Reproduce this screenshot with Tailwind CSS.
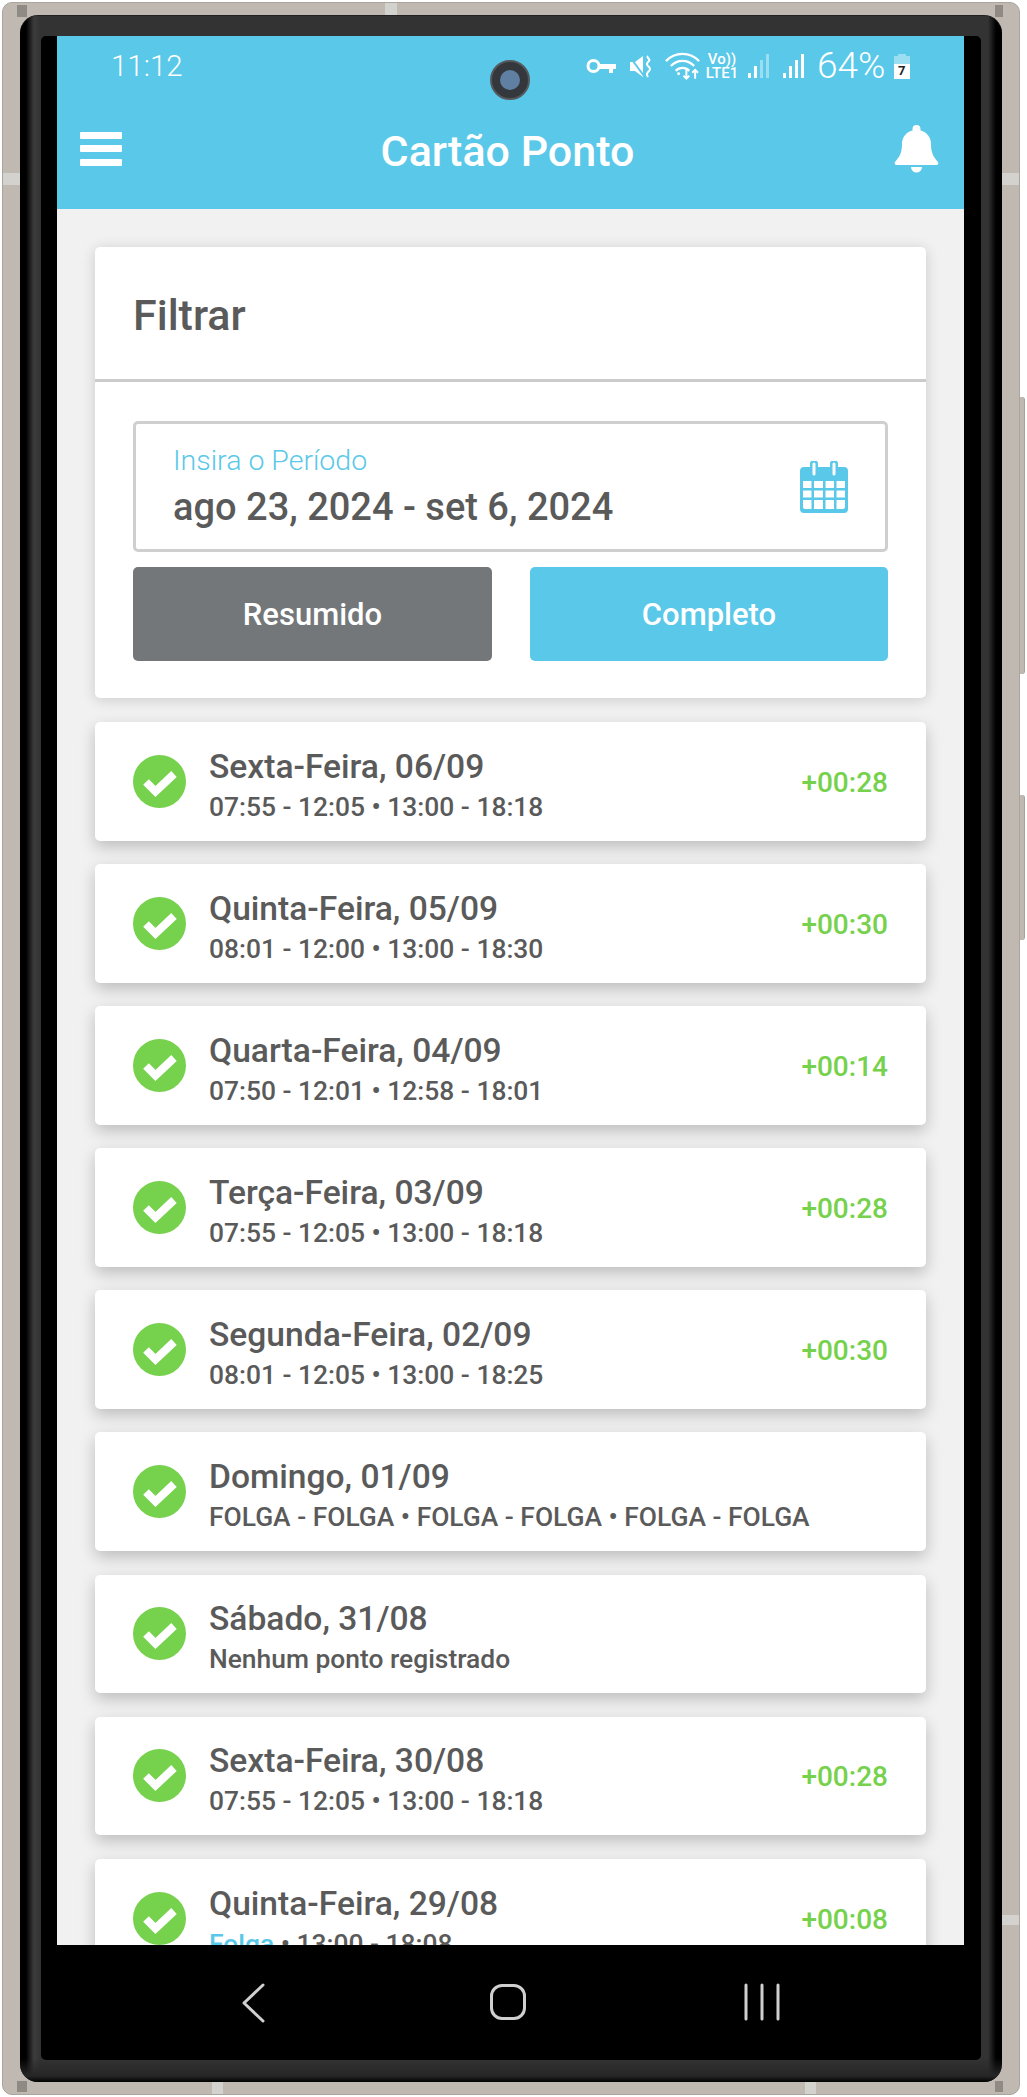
<!DOCTYPE html>
<html lang="pt">
<head>
  <meta charset="UTF-8">
  <title>Cartão Ponto</title>
  <script src="https://cdn.jsdelivr.net/npm/@tailwindcss/browser@4"></script>
</head>
<body class="bg-white font-['Roboto',sans-serif]">
  <div class="relative w-[1027px] h-[2097px] overflow-hidden">
    <!-- side buttons -->
    <div class="absolute left-[1018px] top-[397px] w-[7px] h-[277px] rounded-r-[3px] bg-[#bfb9b1] border-r border-[#a8a29a]"></div>
    <div class="absolute left-[1018px] top-[795px] w-[7px] h-[145px] rounded-r-[3px] bg-[#bfb9b1] border-r border-[#a8a29a]"></div>

    <!-- phone body -->
    <div class="absolute left-[2px] top-[2px] w-[1018px] h-[2093px] rounded-[10px] bg-[#bfb9b1] pl-[17px] pr-[17px] pt-[12px] pb-[12px] border border-[#aaa49c]">
      <div class="h-full rounded-[18px] border-t border-[#222] pl-[21px] pr-[21px] pt-[20px] pb-[22px] bg-[linear-gradient(to_top,#000_0px,#262626_6px,transparent_24px),linear-gradient(to_right,#000_0px,#000_6px,#3c3c3c_14px,#333_20px,#333_calc(100%-14px),#000_calc(100%-6px))]">
        <div class="h-full rounded-[5px] bg-black pl-[16px] pr-[17px] flex flex-col">
          <!-- screen -->
          <div class="h-[1909px] bg-[#f1f1f1] overflow-hidden flex flex-col">
            <header class="h-[173px] bg-[#5ac8e8] text-white shrink-0">
              <div class="h-[70px] flex items-start">
                <span class="ml-[54px] mt-[11px] text-[29.500px] leading-[38px] font-light">11:12</span>
                <div class="ml-auto mr-[53px] mt-[16px] flex items-center h-[28px]">
                  <!-- key -->
                  <svg width="31" height="16" viewBox="0 0 31 16" fill="none" stroke="white" stroke-width="3"><circle cx="7.500" cy="8" r="5.500"/><path d="M13 6h17v5h-3v4h-4v-4h-10" fill="white" stroke="none"/></svg>
                  <!-- mute -->
                  <svg class="ml-[12px]" width="25" height="25" viewBox="0 0 25 25" fill="white"><path d="M1 8h5l8-6v21l-8-6H1z"/><path d="M1 3l14 19" stroke="#5ac8e8" stroke-width="2"/><path d="M19 2c-2 2 3 3 1 5s-3 3-1 5 3 3 1 5-3 3-1 6" fill="none" stroke="white" stroke-width="2"/></svg>
                  <!-- wifi -->
                  <svg class="ml-[11px]" width="35" height="28" viewBox="0 0 36 28" fill="none" stroke="white" stroke-width="2.400"><path d="M1 9C10 -1 26 -1 35 9"/><path d="M6 14c7-7 17-7 24 0"/><path d="M11 19c4-4 10-4 14 0"/><circle cx="14" cy="22" r="1.500" fill="white" stroke="none"/><path d="M22 17v10M19 24l3 3 3-3M31 27V18M28 21l3-3 3 3" stroke-width="2"/></svg>
                  <div class="ml-[7px] w-[30px] flex flex-col items-center text-[15px] leading-[14px] font-medium">
                    <span>Vo))</span>
                    <span>LTE1</span>
                  </div>
                  <!-- signal -->
                  <svg class="ml-[10px]" width="23" height="26" viewBox="0 0 23 26" fill="white"><rect x="1" y="20" width="3" height="5"/><rect x="7" y="13" width="3" height="12"/><rect x="13" y="7" width="3" height="18" opacity=".4"/><rect x="19" y="1" width="3" height="24" opacity=".4"/></svg>
                  <svg class="ml-[12px]" width="23" height="26" viewBox="0 0 23 26" fill="white"><rect x="1" y="20" width="3" height="5"/><rect x="7" y="13" width="3" height="12"/><rect x="13" y="7" width="3" height="18"/><rect x="19" y="1" width="3" height="24"/></svg>
                  <span class="ml-[12px] w-[69px] whitespace-nowrap text-[37px] leading-[28px] font-light">64%</span>
                  <!-- battery -->
                  <div class="ml-[7px] relative w-[18px] h-[25px]">
                    <svg class="absolute left-0 top-0" width="18" height="25" viewBox="0 0 18 25"><path d="M5 0h8v2h4v9H1V2h4z" fill="white" opacity=".4"/><path d="M1 10h16v15H1z" fill="white"/></svg>
                    <span class="absolute left-[5px] top-[10px] text-[13px] leading-[14px] font-bold text-[#222]">7</span>
                  </div>
                </div>
              </div>
              <div class="relative h-[60px] flex items-center justify-center">
                <svg class="absolute left-[23px] top-[26px]" width="42" height="34" viewBox="0 0 42 34" fill="white"><rect width="42" height="7" y="0" rx="1"/><rect width="42" height="7" y="13" rx="1"/><rect width="42" height="7" y="27" rx="1"/></svg>
                <h1 class="text-[43px] leading-[60px] font-medium mt-[30px] mr-[6px]">Cartão Ponto</h1>
                <svg class="absolute left-[837px] top-[19px]" width="45" height="48" viewBox="0 0 45 48" fill="white"><path d="M22.500 0a4 4 0 0 1 4 4v1.500C33 7 37 12.500 37 19c0 10 3 13 7 18 1 1.500 0 3-1.500 3h-40C1 40 0 38.500 1 37c4-5 7-8 7-18C8 12.500 12 7 18.500 5.500V4a4 4 0 0 1 4-4z"/><path d="M17 42h11a5.500 5.500 0 0 1-11 0z"/></svg>
              </div>
            </header>

            <main class="pl-[38px] pr-[38px] pt-[38px]">
              <section class="bg-white rounded-[5px] shadow-[0_2px_14px_rgba(0,0,0,0.16)] h-[451px]">
                <div class="h-[135px] border-b-[3px] border-[#cbcbcb] pl-[38px] flex items-center">
                  <h2 class="text-[43px] font-medium text-[#5a5a5a] mt-[4px]">Filtrar</h2>
                </div>
                <div class="pl-[38px] pr-[38px] pt-[39px]">
                  <div class="h-[131px] rounded-[5px] border-[3px] border-[#cfcfcf] pl-[37px] pr-[37px] flex items-center justify-between">
                    <div class="flex flex-col">
                      <span class="mb-[4px] text-[28.500px] leading-[36px] font-light text-[#5ac8e8]">Insira o Período</span>
                      <span class="text-[38px] leading-[48px] font-medium text-[#5a5a5a]">ago 23, 2024 - set 6, 2024</span>
                    </div>
                    <svg width="48" height="52" viewBox="0 0 48 52" fill="#5ac8e8"><path fill-rule="evenodd" d="M10 3a4 4 0 0 1 8 0v3h12V3a4 4 0 0 1 8 0v3h6a4 4 0 0 1 4 4v38a4 4 0 0 1-4 4H4a4 4 0 0 1-4-4V10a4 4 0 0 1 4-4h6zM12.500 3v10a1.500 1.500 0 0 0 3 0V3a1.500 1.500 0 0 0-3 0zM32.500 3v10a1.500 1.500 0 0 0 3 0V3a1.500 1.500 0 0 0-3 0zM3 20v7h8.500v-7zM14 20v7h9v-7zM25.500 20v7H34v-7zM36.500 20v7H45v-7zM3 29.500v7h8.500v-7zM14 29.500v7h9v-7zM25.500 29.500v7H34v-7zM36.500 29.500v7H45v-7zM3 39v7a2 2 0 0 0 2 2h6.500v-9zM14 39v9h9v-9zM25.500 39v9H34v-9zM36.500 39v9H43a2 2 0 0 0 2-2v-7z"/></svg>
                  </div>
                  <div class="mt-[15px] flex justify-between">
                    <button class="w-[359px] h-[94px] pt-[3px] rounded-[5px] bg-[#74777a] text-white text-[31px] font-medium">Resumido</button>
                    <button class="w-[358px] h-[94px] pt-[3px] rounded-[5px] bg-[#5ac8e8] text-white text-[31px] font-medium">Completo</button>
                  </div>
                </div>
              </section>

              <div id="dias" class="mt-[24px] flex flex-col gap-[23.500px]"></div>
            </main>
          </div>

          <!-- android nav bar -->
          <nav class="relative flex-1">
            <svg class="absolute left-[184px] top-[38px]" width="24" height="40" viewBox="0 0 24 40" fill="none" stroke="#cfcfcf" stroke-width="3" stroke-linecap="round" stroke-linejoin="round"><path d="M22 2L3 20l19 18"/></svg>
            <div class="absolute left-[433px] top-[39px] w-[36px] h-[36px] rounded-[12px] border-[3px] border-[#cfcfcf]"></div>
            <svg class="absolute left-[687px] top-[38px]" width="36" height="38" viewBox="0 0 36 38" stroke="#cfcfcf" stroke-width="3" stroke-linecap="round"><path d="M2 2v34M18 2v34M34 2v34"/></svg>
          </nav>
        </div>
      </div>
    </div>

    <!-- antenna bands -->
    <div class="absolute left-[3px] top-[173px] w-[17px] h-[12px] bg-[#d4d2ce]"></div>
    <div class="absolute left-[1002px] top-[173px] w-[17px] h-[12px] bg-[#d4d2ce]"></div>
    <div class="absolute left-[1002px] top-[1915px] w-[17px] h-[10px] bg-[#d4d2ce]"></div>
    <div class="absolute left-[385px] top-[3px] w-[12px] h-[12px] bg-[#d4d2ce]"></div>
    <div class="absolute left-[212px] top-[2082px] w-[11px] h-[12px] bg-[#d4d2ce]"></div>
    <div class="absolute left-[805px] top-[2082px] w-[11px] h-[12px] bg-[#d4d2ce]"></div>
    <!-- corner wedges -->
    <div class="absolute left-[17px] top-[5px] w-[10px] h-[12px] bg-[#8f8a83]"></div>
    <div class="absolute left-[995px] top-[5px] w-[8px] h-[12px] bg-[#8f8a83]"></div>
    <div class="absolute left-[17px] top-[2081px] w-[10px] h-[11px] bg-[#8f8a83]"></div>
    <div class="absolute left-[995px] top-[2081px] w-[8px] h-[11px] bg-[#8f8a83]"></div>

    <!-- front camera -->
    <div class="absolute left-[490px] top-[60px] w-[40px] h-[40px] rounded-full bg-[#34383d] border-[2px] border-[#55585c] flex items-center justify-center">
      <div class="w-[20px] h-[20px] rounded-full bg-[#5f7fa3]"></div>
    </div>
  </div>

  <script>
    const check = `<svg class="shrink-0" width="53" height="53" viewBox="0 0 53 53"><circle cx="26.500" cy="26.500" r="26.500" fill="#76d14c"/><path d="M13 27l9.500 9.500L41 19" fill="none" stroke="white" stroke-width="8"/></svg>`;

    const dias = [
      ['Sexta-Feira, 06/09', '07:55 - 12:05 • 13:00 - 18:18', '+00:28'],
      ['Quinta-Feira, 05/09', '08:01 - 12:00 • 13:00 - 18:30', '+00:30'],
      ['Quarta-Feira, 04/09', '07:50 - 12:01 • 12:58 - 18:01', '+00:14'],
      ['Terça-Feira, 03/09', '07:55 - 12:05 • 13:00 - 18:18', '+00:28'],
      ['Segunda-Feira, 02/09', '08:01 - 12:05 • 13:00 - 18:25', '+00:30'],
      ['Domingo, 01/09', 'FOLGA - FOLGA • FOLGA - FOLGA • FOLGA - FOLGA', ''],
      ['Sábado, 31/08', 'Nenhum ponto registrado', ''],
      ['Sexta-Feira, 30/08', '07:55 - 12:05 • 13:00 - 18:18', '+00:28'],
      ['Quinta-Feira, 29/08', '<span class="text-[#5ac8e8]">Folga</span> • 13:00 - 18:08', '+00:08'],
    ];

    document.getElementById('dias').innerHTML = dias.map(([titulo, horas, saldo]) => `
      <div class="shrink-0 h-[118.600px] bg-white rounded-[5px] shadow-[0_6px_16px_rgba(0,0,0,0.22)] pl-[38px] pr-[38px] flex items-center">
        ${check}
        <div class="ml-[23px] pt-[7px] flex flex-col">
          <span class="text-[33.600px] leading-[42px] font-medium text-[#5a5a5a]">${titulo}</span>
          <span class="mt-[2px] text-[26.400px] leading-[34px] font-medium text-[#5a5a5a]">${horas}</span>
        </div>
        <span class="ml-auto mt-[3px] text-[28px] font-medium text-[#76d14c]">${saldo}</span>
      </div>
    `).join('');
  </script>
</body>
</html>
